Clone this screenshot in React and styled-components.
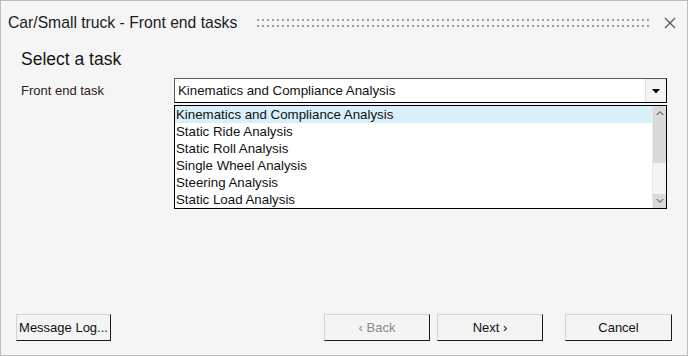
import React from "react";
import styled, { createGlobalStyle } from "styled-components";

const GlobalStyle = createGlobalStyle`
  html, body {
    margin: 0;
    padding: 0;
    background: #f5f5f5;
  }
  * { box-sizing: border-box; }
`;

const Window = styled.div`
  width: 688px;
  height: 356px;
  border: 1px solid #bcbcbc;
  background: #f5f5f5;
  display: flex;
  flex-direction: column;
  font-family: "Liberation Sans", Arial, sans-serif;
  color: #111;
`;

const TitleBar = styled.div`
  height: 43px;
  display: flex;
  align-items: center;
  padding: 0 11px 0 7px;
`;

const Title = styled.div`
  font-size: 15.7px;
  color: #1b1b24;
  white-space: nowrap;
`;

const Grip = styled.div`
  flex: 1;
  height: 8px;
  margin: 0 14px 0 20px;
  background-image: radial-gradient(circle at 1px 1px, #9c9c9c 1.1px, transparent 1.4px);
  background-size: 5px 6px;
`;

const CloseButton = styled.div`
  width: 12px;
  height: 12px;
  display: flex;
  align-items: center;
  justify-content: center;
`;

const Body = styled.div`
  padding: 0 20px;
  display: flex;
  flex-direction: column;
`;

const Heading = styled.div`
  font-size: 17.5px;
  line-height: 22px;
  margin: 4px 0 8px;
  color: #151515;
`;

const FieldRow = styled.div`
  display: grid;
  grid-template-columns: 153px 1fr;
  align-items: start;
`;

const Label = styled.div`
  font-size: 13px;
  line-height: 25px;
  color: #2e1c1c;
`;

const Combo = styled.div`
  height: 25px;
  display: flex;
  border-top: 1px solid #5a5a5a;
  border-left: 1px solid #5a5a5a;
  border-right: 1px solid #000;
  border-bottom: 1px solid #000;
  background: #fff;
`;

const ComboValue = styled.div`
  flex: 1;
  font-size: 13.3px;
  line-height: 23px;
  padding-left: 3px;
`;

const DropButton = styled.div`
  width: 21px;
  background: #f4f4f4;
  border-left: 1px solid #e0e0e0;
  border-top: 1px solid #ececec;
  display: flex;
  align-items: center;
  justify-content: center;
`;

const ListBox = styled.div`
  margin-top: 2px;
  height: 104px;
  border: 1px solid #000;
  background: #fff;
  display: flex;
`;

const Items = styled.div`
  flex: 1;
  display: flex;
  flex-direction: column;
`;

const Item = styled.div`
  height: 17px;
  line-height: 17px;
  font-size: 13.3px;
  padding-left: 1px;
  background: ${(p) => (p.selected ? "#d9f0fa" : "transparent")};
`;

const ScrollBar = styled.div`
  width: 14px;
  background: #f4f4f4;
  border-left: 1px solid #e8e8e8;
  display: flex;
  flex-direction: column;
`;

const ScrollArrow = styled.div`
  height: 14px;
  background: #dadada;
  display: flex;
  align-items: center;
  justify-content: center;
`;

const Thumb = styled.div`
  height: 43px;
  background: #dadada;
`;

const Track = styled.div`
  flex: 1;
`;

const Footer = styled.div`
  margin-top: auto;
  padding: 0 15px 14px;
  display: flex;
  align-items: center;
`;

const Button = styled.button`
  height: 27px;
  width: ${(p) => p.w}px;
  margin-left: ${(p) => p.ml || 0}px;
  padding: 0;
  background: #f4f4f4;
  border-top: 1px solid #d4d4d4;
  border-left: 1px solid #d4d4d4;
  border-right: 1px solid #1a1a1a;
  border-bottom: 1px solid #1a1a1a;
  font-family: "Liberation Sans", Arial, sans-serif;
  font-size: 13px;
  color: ${(p) => (p.disabled ? "#8a8a8a" : "#111")};
  white-space: nowrap;
`;

const Spacer = styled.div`
  flex: 1;
`;

const tasks = [
  "Kinematics and Compliance Analysis",
  "Static Ride Analysis",
  "Static Roll Analysis",
  "Single Wheel Analysis",
  "Steering Analysis",
  "Static Load Analysis",
];

export default function App() {
  return (
    <>
      <GlobalStyle />
      <Window>
        <TitleBar>
          <Title>Car/Small truck - Front end tasks</Title>
          <Grip />
          <CloseButton>
            <svg width="12" height="12" viewBox="0 0 12 12">
              <path d="M1 1L11 11M11 1L1 11" stroke="#5a5a5a" strokeWidth="1.3" />
            </svg>
          </CloseButton>
        </TitleBar>
        <Body>
          <Heading>Select a task</Heading>
          <FieldRow>
            <Label>Front end task</Label>
            <div>
              <Combo>
                <ComboValue>{tasks[0]}</ComboValue>
                <DropButton>
                  <svg width="8" height="5" viewBox="0 0 8 5">
                    <path d="M0 0H8L4 4.5Z" fill="#000" />
                  </svg>
                </DropButton>
              </Combo>
              <ListBox>
                <Items>
                  {tasks.map((t, i) => (
                    <Item key={t} selected={i === 0}>
                      {t}
                    </Item>
                  ))}
                </Items>
                <ScrollBar>
                  <ScrollArrow>
                    <svg width="8" height="6" viewBox="0 0 8 6">
                      <path d="M0 5L4 1L8 5L6.5 5L4 2.5L1.5 5Z" fill="#6a6a6a" />
                    </svg>
                  </ScrollArrow>
                  <Thumb />
                  <Track />
                  <ScrollArrow>
                    <svg width="8" height="6" viewBox="0 0 8 6">
                      <path d="M0 1L4 5L8 1L6.5 1L4 3.5L1.5 1Z" fill="#6a6a6a" />
                    </svg>
                  </ScrollArrow>
                </ScrollBar>
              </ListBox>
            </div>
          </FieldRow>
        </Body>
        <Footer>
          <Button w={95}>Message Log...</Button>
          <Spacer />
          <Button w={106} disabled>
            ‹ Back
          </Button>
          <Button w={106} ml={7}>
            Next ›
          </Button>
          <Button w={107} ml={22}>
            Cancel
          </Button>
        </Footer>
      </Window>
    </>
  );
}
